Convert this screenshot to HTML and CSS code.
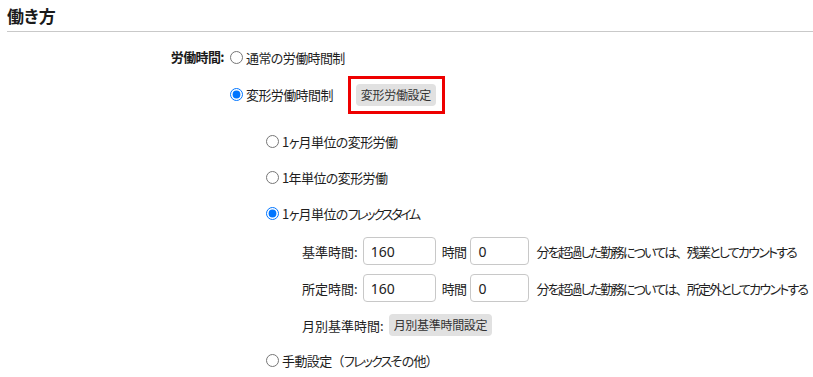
FILE: index.html
```html
<!DOCTYPE html>
<html lang="ja">
<head>
<meta charset="utf-8">
<title>働き方</title>
<link rel="stylesheet" href="styles.css">
</head>
<body>
<section class="sec">
  <h2 class="sec-title">働き方</h2>
  <div class="form-row">
    <div class="form-label">労働時間:</div>
    <div class="field">
      <div class="opt">
        <label class="radio"><input type="radio" name="wt"><span>通常の労働時間制</span></label>
      </div>
      <div class="opt opt-box">
        <label class="radio"><input type="radio" name="wt" checked><span>変形労働時間制</span></label>
        <span class="hl"><button class="btn" type="button">変形労働設定</button></span>
      </div>
      <div class="sub">
        <div class="opt">
          <label class="radio"><input type="radio" name="vt"><span>1ヶ月単位の変形労働</span></label>
        </div>
        <div class="opt">
          <label class="radio"><input type="radio" name="vt"><span>1年単位の変形労働</span></label>
        </div>
        <div class="opt">
          <label class="radio"><input type="radio" name="vt" checked><span>1ヶ月単位の<span class="kana">フレックスタイム</span></span></label>
        </div>
        <div class="flex-set">
          <div class="line">
            <span class="lbl">基準時間:</span>
            <input class="inp inp-h" type="text" value="160">
            <span class="unit">時間</span>
            <input class="inp inp-m" type="text" value="0">
            <span class="desc">分を超過した勤務については<span class="full">、</span>残業としてカウントする</span>
          </div>
          <div class="line">
            <span class="lbl">所定時間:</span>
            <input class="inp inp-h" type="text" value="160">
            <span class="unit">時間</span>
            <input class="inp inp-m" type="text" value="0">
            <span class="desc">分を超過した勤務については<span class="full">、</span>所定外としてカウントする</span>
          </div>
          <div class="line line-btn">
            <span class="lbl">月別基準時間:</span>
            <button class="btn" type="button">月別基準時間設定</button>
          </div>
        </div>
        <div class="opt">
          <label class="radio"><input type="radio" name="vt"><span>手動設定<span class="full">（</span><span class="kana2">フレックス</span>その他）</span></label>
        </div>
      </div>
    </div>
  </div>
</section>
</body>
</html>
```
FILE: styles.css
```css
html, body {
  margin: 0;
  padding: 0;
  background: #ffffff;
}

body {
  font-family: "Noto Sans CJK JP", "Noto Sans", sans-serif;
  font-feature-settings: "palt";
  font-size: 13px;
  letter-spacing: -0.6px;
  color: #1e1e1e;
  overflow: hidden;
  white-space: nowrap;
}

.sec {
  padding-left: 7px;
}

.sec-title {
  margin: 0;
  box-sizing: content-box;
  height: 25px;
  padding-top: 6px;
  font-size: 17px;
  line-height: 20px;
  letter-spacing: 0;
  font-weight: bold;
  color: #1a1a1a;
  border-bottom: 1px solid #c9c9c9;
}

.form-row {
  display: flex;
  padding-top: 12px;
}

.form-label {
  flex: none;
  width: 217px;
  text-align: right;
  font-weight: bold;
  height: 26px;
  line-height: 26px;
  color: #1a1a1a;
}

.field {
  flex: none;
  display: flex;
  flex-direction: column;
  padding-left: 6px;
}

.opt {
  display: flex;
  align-items: center;
  height: 26px;
}

.opt-box {
  height: 37px;
  margin-top: 6px;
  gap: 15px;
}

.radio {
  display: flex;
  align-items: center;
  gap: 3px;
}

.radio input {
  margin: 0;
  width: 13px;
  height: 13px;
}

.kana {
  letter-spacing: -2.4px;
}

.kana2 {
  letter-spacing: -1.8px;
}

.full {
  font-feature-settings: normal;
}

.hl {
  display: inline-flex;
  border: 3px solid #ee0000;
  padding: 5px 6px 5px 5px;
}

.btn {
  font-family: inherit;
  font-feature-settings: "palt";
  font-size: 12px;
  letter-spacing: -0.3px;
  color: #333333;
  background: #e1e1e1;
  border: none;
  border-radius: 4px;
  height: 22px;
  padding: 0 5px;
  line-height: 22px;
}

.sub {
  display: flex;
  flex-direction: column;
  gap: 10px;
  margin-top: 15px;
  padding-left: 36px;
}

.flex-set {
  display: flex;
  flex-direction: column;
  gap: 9px;
  margin-top: 1px;
  padding-left: 36px;
}

.line {
  display: flex;
  align-items: center;
  height: 28px;
  gap: 4px;
}

.line-btn {
  height: 24px;
  margin-top: 2px;
}

.lbl {
  letter-spacing: 0;
  margin-right: 1px;
}

.unit {
  margin-left: 2px;
}

.inp {
  box-sizing: border-box;
  height: 28px;
  border: 1px solid #c8c8c8;
  border-radius: 4px;
  padding: 0 7px;
  font-family: "Noto Sans", sans-serif;
  font-size: 14px;
  letter-spacing: 0;
  color: #222222;
  background: #ffffff;
}

.inp-h {
  width: 73px;
}

.inp-m {
  width: 59px;
}

.desc {
  margin-left: 3px;
  letter-spacing: -1.75px;
}
```
